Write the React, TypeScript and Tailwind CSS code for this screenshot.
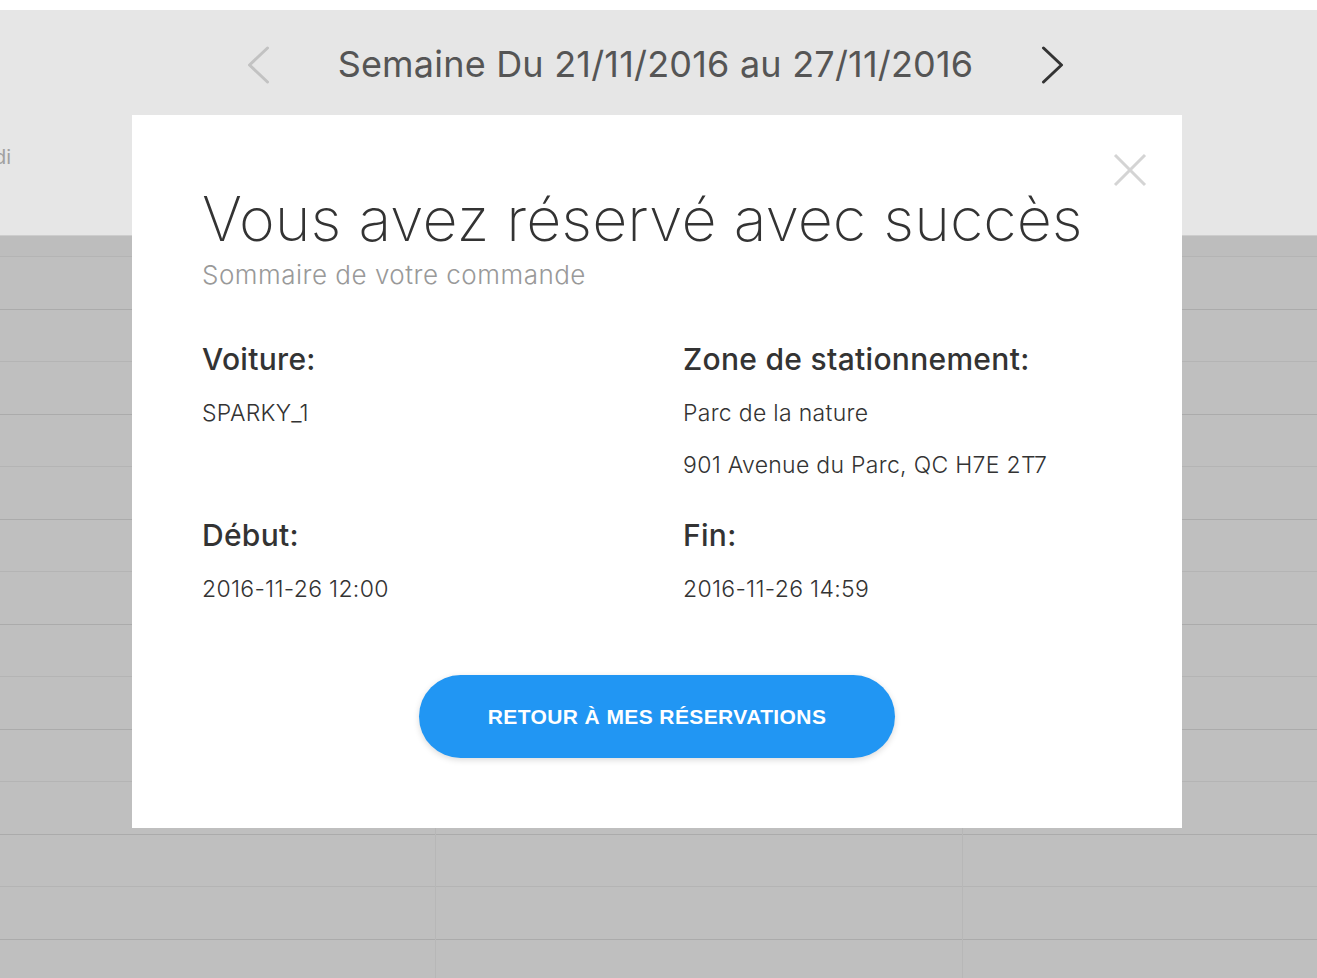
import React from "react";

function HourBlock() {
  return (
    <div className="flex flex-col">
      <div className="h-[53px] border-t border-[#b4b4b4]" />
      <div className="h-[52px] border-t border-[#ababab]" />
    </div>
  );
}

export default function App() {
  const blocks = Array.from({ length: 7 });
  return (
    <div
      className="relative w-[1317px] h-[978px] overflow-hidden bg-white"
      style={{ fontFamily: "Inter, 'Noto Sans', sans-serif" }}
    >
      <div className="h-[10px] bg-white" />
      {/* header */}
      <div className="h-[226px] bg-[#e6e6e6] border-b border-[#cdcdcd] flex flex-col">
        <div className="flex items-center justify-center h-[110px] pb-[2px]">
          <svg width="30" height="40" viewBox="0 0 30 40" className="mr-[60px]">
            <polyline points="19.5,4 1.5,21 19.5,38" fill="none" stroke="#c2c2c2" strokeWidth="3" strokeLinecap="round" strokeLinejoin="round" />
          </svg>
          <div className="text-[36px] text-[#555] tracking-[0.2px]">Semaine Du 21/11/2016 au 27/11/2016</div>
          <svg width="30" height="40" viewBox="0 0 30 40" className="ml-[66px]">
            <polyline points="4.5,4 22.5,21 4.5,38" fill="none" stroke="#333" strokeWidth="3" strokeLinecap="round" strokeLinejoin="round" />
          </svg>
        </div>
        <div className="flex mt-[22px] text-[20px] text-[#a0a0a0]">
          <span className="ml-[-41px]">Lundi</span>
        </div>
      </div>
      {/* calendar grid */}
      <div className="h-[20px] bg-[#bdbdbd]" />
      <div className="grid grid-cols-[435px_527px_1fr] bg-[#bfbfbf]">
        {[0, 1, 2].map((c) => (
          <div key={c} className={c > 0 ? "border-l border-[#b7b7b7]" : ""}>
            {blocks.map((_, i) => (
              <HourBlock key={i} />
            ))}
          </div>
        ))}
      </div>

      {/* modal */}
      <div className="absolute left-[132px] top-[115px] w-[1050px] h-[713px] bg-white pl-[70px] pt-[72px]">
        <button className="absolute right-[34px] top-[37px] w-[36px] h-[36px] flex items-center justify-center">
          <svg width="36" height="36" viewBox="0 0 36 36">
            <line x1="3" y1="3" x2="33" y2="33" stroke="#d4d4d4" strokeWidth="3" />
            <line x1="33" y1="3" x2="3" y2="33" stroke="#d4d4d4" strokeWidth="3" />
          </svg>
        </button>
        <h1 className="text-[61px] leading-[64px] font-extralight text-[#333]">
          Vous avez réservé avec succès
        </h1>
        <div className="text-[26px] leading-[30px] text-[#999] mt-[9px] font-light tracking-[0.5px]">
          Sommaire de votre commande
        </div>

        <div className="grid grid-cols-[481px_1fr] mt-[51px] text-[#333]">
          <div>
            <div className="text-[30px] leading-[36px] font-medium tracking-[0.3px]">Voiture:</div>
            <div className="text-[23px] leading-[28px] mt-[22px] font-light tracking-[0.3px]">SPARKY_1</div>
          </div>
          <div>
            <div className="text-[30px] leading-[36px] font-medium tracking-[0.3px]">Zone de stationnement:</div>
            <div className="text-[23px] leading-[28px] mt-[22px] font-light tracking-[0.3px]">Parc de la nature</div>
            <div className="text-[23px] leading-[28px] mt-[24px] font-light tracking-[0.3px]">
              901 Avenue du Parc, QC H7E 2T7
            </div>
          </div>
          <div className="mt-[38px]">
            <div className="text-[30px] leading-[36px] font-medium tracking-[0.3px]">Début:</div>
            <div className="text-[23px] leading-[28px] mt-[22px] font-light tracking-[0.3px]">2016-11-26 12:00</div>
          </div>
          <div className="mt-[38px]">
            <div className="text-[30px] leading-[36px] font-medium tracking-[0.3px]">Fin:</div>
            <div className="text-[23px] leading-[28px] mt-[22px] font-light tracking-[0.3px]">2016-11-26 14:59</div>
          </div>
        </div>

        <div className="flex justify-center pr-[70px] mt-[72px]">
          <button
            className="w-[476px] h-[83px] rounded-full bg-[#2196f3] text-white text-[21px] font-bold tracking-[0.4px] shadow-[0_2px_6px_rgba(0,0,0,0.15)]"
            style={{ fontFamily: "'Liberation Sans', Arial, sans-serif" }}
          >
            RETOUR À MES RÉSERVATIONS
          </button>
        </div>
      </div>
    </div>
  );
}
